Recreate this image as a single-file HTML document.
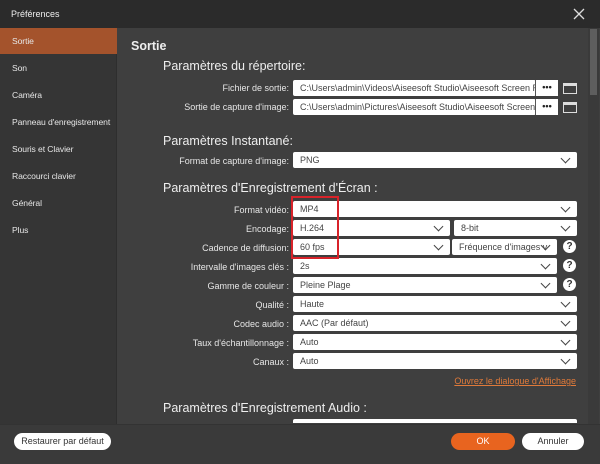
<!DOCTYPE html>
<html><head><meta charset="utf-8"><style>
*{margin:0;padding:0;box-sizing:border-box}
body{width:600px;height:464px;background:#3f3f3f;font-family:"Liberation Sans",sans-serif;font-size:9px;color:#e8e8e8;position:relative;overflow:hidden}
.a{position:absolute}
#title{left:0;top:0;width:600px;height:28px;background:#2b2b2b}
#side{left:0;top:28px;width:117px;height:396px;background:#353535;border-right:1px solid #2e2e2e}
.nav{position:absolute;left:0;width:117px;height:26px;line-height:26px;padding-left:12px;font-size:8.6px;color:#e6e6e6;white-space:nowrap;overflow:hidden;letter-spacing:-0.1px}
.lbl{position:absolute;right:311px;font-size:9px;color:#e6e6e6;white-space:nowrap}
.box{position:absolute;height:16px;background:#fff;border-radius:2px;color:#444;font-size:9px;line-height:16px;padding-left:7px;white-space:nowrap;overflow:hidden}
.sel::after{content:"";position:absolute;right:8px;top:3px;width:6px;height:6px;border-right:1.5px solid #444;border-bottom:1.5px solid #444;transform:rotate(45deg)}
.h{position:absolute;font-size:12.5px;color:#eee;white-space:nowrap}
.q{position:absolute;width:13px;height:13px;border-radius:50%;background:#fff;color:#333;font-weight:bold;font-size:10px;text-align:center;line-height:13px}
.dots{position:absolute;width:23px;height:16px;background:#fff;border-left:1px solid #555;color:#222;font-weight:bold;font-size:9px;text-align:center;line-height:14px}
.fold{position:absolute;width:14px;height:11px;border:1.5px solid #ddd;border-top-width:3px}
.btn{position:absolute;height:17px;border-radius:9px;font-size:9px;line-height:17px;text-align:center}
</style></head><body>
<div id="title" class="a"><span class="a" style="left:11px;top:9px;font-size:9px;color:#eee">Préférences</span>
<svg class="a" style="left:573px;top:8px" width="12" height="12"><path d="M1 1L11 11M11 1L1 11" stroke="#ddd" stroke-width="1.3"/></svg></div>
<div id="side" class="a">
<div class="nav" style="top:0;background:#a4532c">Sortie</div>
<div class="nav" style="top:27px">Son</div>
<div class="nav" style="top:54px">Caméra</div>
<div class="nav" style="top:81px">Panneau d'enregistrement</div>
<div class="nav" style="top:108px">Souris et Clavier</div>
<div class="nav" style="top:135px">Raccourci clavier</div>
<div class="nav" style="top:162px">Général</div>
<div class="nav" style="top:189px">Plus</div>
</div>
<div class="a" style="left:588px;top:28px;width:11px;height:396px;background:#3a3a3a"></div>
<div class="a" style="left:590px;top:29px;width:7px;height:66px;background:#5e5e5e"></div>

<div class="h" style="left:131px;top:39px;font-weight:bold">Sortie</div>
<div class="h" style="left:163px;top:59px">Paramètres du répertoire:</div>
<div class="lbl" style="top:83px">Fichier de sortie:</div>
<div class="box" style="left:293px;top:80px;width:243px">C:\Users\admin\Videos\Aiseesoft Studio\Aiseesoft Screen R</div>
<div class="dots" style="left:535px;top:80px">•••</div><div class="fold" style="left:563px;top:83px"></div>
<div class="lbl" style="top:102px">Sortie de capture d'image:</div>
<div class="box" style="left:293px;top:99px;width:243px">C:\Users\admin\Pictures\Aiseesoft Studio\Aiseesoft Screen</div>
<div class="dots" style="left:535px;top:99px">•••</div><div class="fold" style="left:563px;top:102px"></div>

<div class="h" style="left:163px;top:134px">Paramètres Instantané:</div>
<div class="lbl" style="top:156px">Format de capture d'image:</div>
<div class="box sel" style="left:293px;top:152px;width:284px">PNG</div>

<div class="h" style="left:163px;top:181px">Paramètres d'Enregistrement d'Écran :</div>
<div class="lbl" style="top:205px">Format vidéo:</div>
<div class="box sel" style="left:293px;top:201px;width:284px">MP4</div>
<div class="lbl" style="top:224px">Encodage:</div>
<div class="box sel" style="left:293px;top:220px;width:157px">H.264</div>
<div class="box sel" style="left:454px;top:220px;width:123px">8-bit</div>
<div class="lbl" style="top:243px">Cadence de diffusion:</div>
<div class="box sel" style="left:293px;top:239px;width:157px">60 fps</div>
<div class="box sel" style="left:452px;top:239px;width:105px">Fréquence d'images v</div>
<div class="q" style="left:563px;top:240px">?</div>
<div class="lbl" style="top:262px">Intervalle d'images clés :</div>
<div class="box sel" style="left:293px;top:258px;width:264px">2s</div>
<div class="q" style="left:563px;top:259px">?</div>
<div class="lbl" style="top:281px">Gamme de couleur :</div>
<div class="box sel" style="left:293px;top:277px;width:264px">Pleine Plage</div>
<div class="q" style="left:563px;top:278px">?</div>
<div class="lbl" style="top:300px">Qualité :</div>
<div class="box sel" style="left:293px;top:296px;width:284px">Haute</div>
<div class="lbl" style="top:319px">Codec audio :</div>
<div class="box sel" style="left:293px;top:315px;width:284px">AAC (Par défaut)</div>
<div class="lbl" style="top:338px">Taux d'échantillonnage :</div>
<div class="box sel" style="left:293px;top:334px;width:284px">Auto</div>
<div class="lbl" style="top:357px">Canaux :</div>
<div class="box sel" style="left:293px;top:353px;width:284px">Auto</div>
<div class="a" style="left:291px;top:196px;width:48px;height:63px;border:2px solid #d8232a"></div>
<div class="a" style="right:24px;top:376px;color:#e07a3a;text-decoration:underline;font-size:9px">Ouvrez le dialogue d'Affichage</div>
<div class="h" style="left:163px;top:401px">Paramètres d'Enregistrement Audio :</div>
<div class="a" style="left:293px;top:419px;width:284px;height:4px;background:#fff;border-radius:2px 2px 0 0"></div>

<div class="a" style="left:0;top:424px;width:600px;height:40px;background:#3a3a3a;border-top:1px solid #333"></div>
<div class="btn" style="left:14px;top:433px;width:97px;background:#fff;color:#333">Restaurer par défaut</div>
<div class="btn" style="left:451px;top:433px;width:64px;background:#e8641f;color:#fff">OK</div>
<div class="btn" style="left:522px;top:433px;width:62px;background:#fff;color:#333">Annuler</div>
</body></html>
